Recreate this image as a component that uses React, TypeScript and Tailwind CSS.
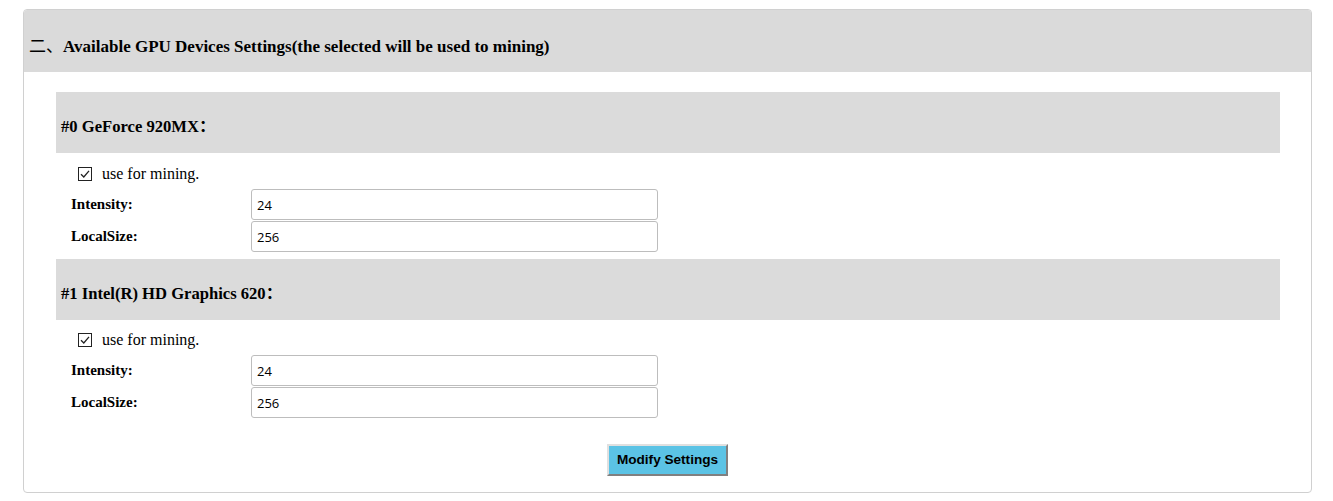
const devices = [
  { id: 0, name: 'GeForce 920MX', intensity: '24', localSize: '256' },
  { id: 1, name: 'Intel(R) HD Graphics 620', intensity: '24', localSize: '256' }
]

function CheckMark() {
  return (
    <svg width="14" height="14" viewBox="0 0 14 14" className="shrink-0">
      <rect x="0.5" y="0.5" width="13" height="13" fill="white" stroke="#222" strokeWidth="1" />
      <path d="M3 7.2 L5.8 10 L11 3.8" fill="none" stroke="#222" strokeWidth="1.3" />
    </svg>
  )
}

function DeviceBlock({ id, name, intensity, localSize }: typeof devices[number]) {
  return (
    <div>
      <div className="h-[61px] bg-[#dbdbdb] flex items-center pt-[9px] pl-[5px]">
        <h4 className="text-[16.6px] font-bold text-black leading-5">#{id} {name}：</h4>
      </div>
      <div className={(id === 0 ? 'h-[36px] pt-[5px]' : 'h-[35px] pt-[4px]') + ' flex items-center gap-[10px] pl-[22px]'}>
        <CheckMark />
        <span className="text-[16px] text-black">use for mining.</span>
      </div>
      <div className="flex flex-col gap-px">
        <div className="flex items-center">
          <label className="w-[195px] pl-[15px] text-[15px] font-bold">Intensity:</label>
          <input
            readOnly
            value={intensity}
            className="w-[407px] h-[31px] border border-[#bdbdbd] rounded-[3px] px-[5px] text-[13px] font-['Open_Sans',sans-serif] outline-none"
          />
        </div>
        <div className="flex items-center">
          <label className="w-[195px] pl-[15px] text-[15px] font-bold">LocalSize:</label>
          <input
            readOnly
            value={localSize}
            className="w-[407px] h-[31px] border border-[#bdbdbd] rounded-[3px] px-[5px] text-[13px] font-['Open_Sans',sans-serif] outline-none"
          />
        </div>
      </div>
    </div>
  )
}

export default function App() {
  return (
    <div className="bg-white min-h-[501px] pt-[9px] pl-[23px] pr-[21px] font-['Liberation_Serif','Noto_Sans_CJK_SC',serif] text-black">
      <div className="border border-[#d0d0d0] rounded-[4px] h-[484px] overflow-hidden">
        <div className="h-[62px] bg-[#dadada] flex items-center pt-[9px] pl-[5px]">
          <h3 className="text-[17px] font-bold leading-5">
            <span className="font-['Noto_Sans_CJK_SC',sans-serif] font-normal">二、</span>
            Available GPU Devices Settings(the selected will be used to mining)
          </h3>
        </div>
        <div className="pl-[32px] pr-[31px] pt-[20px] flex flex-col gap-[7px]">
          {devices.map(d => (
            <DeviceBlock key={d.id} {...d} />
          ))}
        </div>
        <div className="flex justify-center pt-[26px]">
          <button className="w-[121px] h-[32px] bg-[#5bc3e5] border-2 border-t-[#e0e0e0] border-l-[#e0e0e0] border-b-[#808080] border-r-[#808080] text-[13.6px] font-bold font-['Liberation_Sans',sans-serif] text-black">
            Modify Settings
          </button>
        </div>
      </div>
    </div>
  )
}
